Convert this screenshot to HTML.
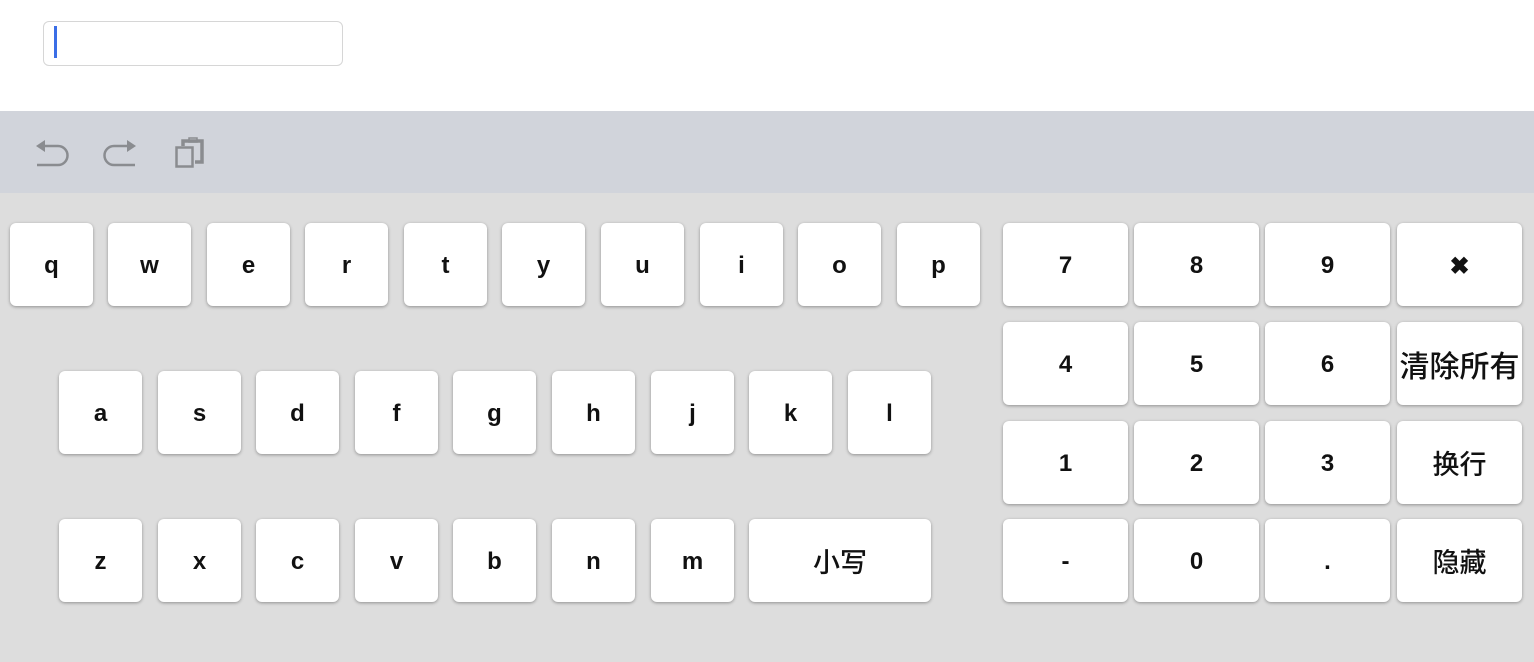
<!DOCTYPE html>
<html><head><meta charset="utf-8"><style>
body{margin:0;width:1534px;height:662px;position:relative;overflow:hidden;background:#fff;font-family:"Liberation Sans","Noto Sans CJK SC",sans-serif}
.inp{position:absolute;left:43px;top:21px;width:298px;height:43px;border:1px solid #d6d6d6;border-radius:6px;background:#fff}
.cur{position:absolute;left:10px;top:4px;width:3px;height:32px;background:#3b6ee6}
.tb{position:absolute;left:0;top:111px;width:1534px;height:82px;background:#d1d4db}
.kb{position:absolute;left:0;top:193px;width:1534px;height:469px;background:#dddddd}
.k{position:absolute;width:83px;height:80px;padding-top:3px;background:#fff;border-radius:6px;box-shadow:0 1px 3px rgba(0,0,0,.35);display:flex;align-items:center;justify-content:center;font-size:24px;font-weight:bold;color:#111}
.n{width:125px}
.c{font-weight:500;font-size:27px;padding-top:0;height:83px}
</style></head><body>
<div class="inp"><div class="cur"></div></div>
<div class="tb">
<svg width="220" height="82" style="position:absolute;left:0;top:0" fill="none" stroke="#8a8c90" stroke-width="2.5">
<path d="M44 35 H58 A9.5 9.5 0 0 1 58 54 H37"/><path d="M36 35 L45 29 V41 Z" fill="#8a8c90" stroke="none"/>
<path d="M128 35 H114 A9.5 9.5 0 0 0 114 54 H135"/><path d="M136 35 L127 29 V41 Z" fill="#8a8c90" stroke="none"/>
<rect x="176.5" y="36.5" width="16" height="19"/>
<path d="M183 35 V30 H202 V51 H195" stroke-width="3.5"/>
<rect x="189" y="27" width="8" height="4" stroke-width="1.5"/>
</svg>
</div>
<div class="kb"></div>
<div class="k" style="left:10px;top:223px">q</div>
<div class="k" style="left:108px;top:223px">w</div>
<div class="k" style="left:207px;top:223px">e</div>
<div class="k" style="left:305px;top:223px">r</div>
<div class="k" style="left:404px;top:223px">t</div>
<div class="k" style="left:502px;top:223px">y</div>
<div class="k" style="left:601px;top:223px">u</div>
<div class="k" style="left:700px;top:223px">i</div>
<div class="k" style="left:798px;top:223px">o</div>
<div class="k" style="left:897px;top:223px">p</div>
<div class="k" style="left:59px;top:371px">a</div>
<div class="k" style="left:158px;top:371px">s</div>
<div class="k" style="left:256px;top:371px">d</div>
<div class="k" style="left:355px;top:371px">f</div>
<div class="k" style="left:453px;top:371px">g</div>
<div class="k" style="left:552px;top:371px">h</div>
<div class="k" style="left:651px;top:371px">j</div>
<div class="k" style="left:749px;top:371px">k</div>
<div class="k" style="left:848px;top:371px">l</div>
<div class="k" style="left:59px;top:519px">z</div>
<div class="k" style="left:158px;top:519px">x</div>
<div class="k" style="left:256px;top:519px">c</div>
<div class="k" style="left:355px;top:519px">v</div>
<div class="k" style="left:453px;top:519px">b</div>
<div class="k" style="left:552px;top:519px">n</div>
<div class="k" style="left:651px;top:519px">m</div>
<div class="k c" style="left:749px;top:519px;width:182px">小写</div>
<div class="k n" style="left:1003px;top:223px">7</div>
<div class="k n" style="left:1134px;top:223px">8</div>
<div class="k n" style="left:1265px;top:223px">9</div>
<div class="k n" style="left:1397px;top:223px">✖</div>
<div class="k n" style="left:1003px;top:322px">4</div>
<div class="k n" style="left:1134px;top:322px">5</div>
<div class="k n" style="left:1265px;top:322px">6</div>
<div class="k n c" style="left:1397px;top:322px;font-size:30px;white-space:nowrap">清除所有</div>
<div class="k n" style="left:1003px;top:421px">1</div>
<div class="k n" style="left:1134px;top:421px">2</div>
<div class="k n" style="left:1265px;top:421px">3</div>
<div class="k n c" style="left:1397px;top:421px">换行</div>
<div class="k n" style="left:1003px;top:519px">-</div>
<div class="k n" style="left:1134px;top:519px">0</div>
<div class="k n" style="left:1265px;top:519px">.</div>
<div class="k n c" style="left:1397px;top:519px">隐藏</div>
</body></html>
